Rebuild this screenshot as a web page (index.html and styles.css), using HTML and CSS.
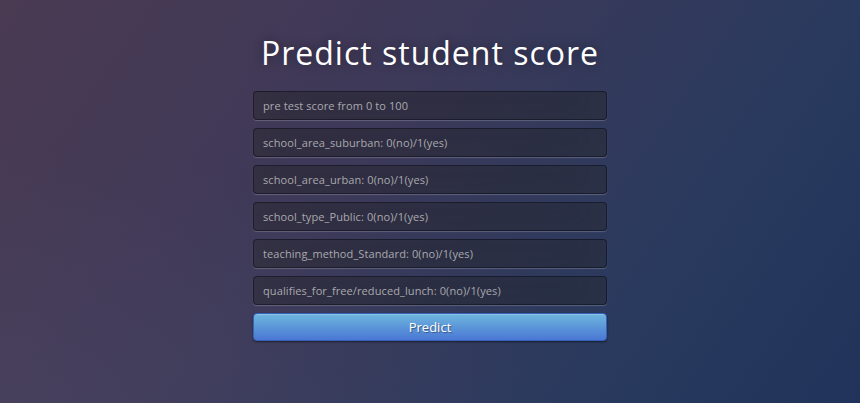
FILE: index.html
```html
<!DOCTYPE html>
<html lang="en">
<head>
<meta charset="utf-8">
<title>Predict student score</title>
<link rel="stylesheet" href="styles.css">
</head>
<body>
<div class="login">
  <h1 class="title">Predict student score</h1>
  <form class="form">
    <input class="field" type="text" placeholder="pre test score from 0 to 100">
    <input class="field" type="text" placeholder="school_area_suburban: 0(no)/1(yes)">
    <input class="field" type="text" placeholder="school_area_urban: 0(no)/1(yes)">
    <input class="field" type="text" placeholder="school_type_Public: 0(no)/1(yes)">
    <input class="field" type="text" placeholder="teaching_method_Standard: 0(no)/1(yes)">
    <input class="field" type="text" placeholder="qualifies_for_free/reduced_lunch: 0(no)/1(yes)">
    <button class="btn" type="button">Predict</button>
  </form>
</div>
</body>
</html>
```
FILE: styles.css
```css
html, body {
  margin: 0;
  height: 100%;
}
body {
  font-family: "Open Sans", sans-serif;
  background:
    radial-gradient(ellipse at 0% 100%, rgba(90,90,115,0.22) 0%, rgba(90,90,115,0) 45%),
    linear-gradient(125deg, #4a3a52 0%, #3d3959 40%, #293a5e 75%, #21335a 100%);
  display: flex;
  justify-content: center;
}
.login {
  width: 354px;
  padding-top: 31px;
  display: flex;
  flex-direction: column;
  align-items: stretch;
}
.title {
  margin: 0 0 16px;
  color: #fff;
  font-size: 32px;
  line-height: 44px;
  font-weight: 400;
  letter-spacing: 1px;
  text-align: center;
  text-shadow: 0 0 10px rgba(0,0,0,0.4);
}
.form {
  display: flex;
  flex-direction: column;
  gap: 8px;
}
.field {
  box-sizing: border-box;
  height: 29px;
  width: 100%;
  margin: 0;
  padding: 0 9px;
  font-family: "Open Sans", sans-serif;
  font-size: 11px;
  letter-spacing: 0.1px;
  color: #fff;
  background: rgba(0,0,0,0.3);
  border: 1px solid rgba(0,0,0,0.3);
  border-radius: 4px;
  outline: none;
  box-shadow: inset 0 -5px 45px rgba(100,100,100,0.2), 0 1px 1px rgba(255,255,255,0.2);
}
.field::placeholder {
  color: #a9a9ad;
}
.btn {
  box-sizing: border-box;
  height: 28px;
  width: 100%;
  font-family: "Open Sans", sans-serif;
  font-size: 13px;
  color: #fff;
  background: linear-gradient(#6eb6de, #4a77d4);
  border: 1px solid #3762bc;
  border-radius: 4px;
  text-shadow: 1px 1px 1px rgba(0,0,0,0.4);
  box-shadow: inset 0 1px 0 rgba(255,255,255,0.2), 0 1px 2px rgba(0,0,0,0.5);
  cursor: pointer;
}
```
